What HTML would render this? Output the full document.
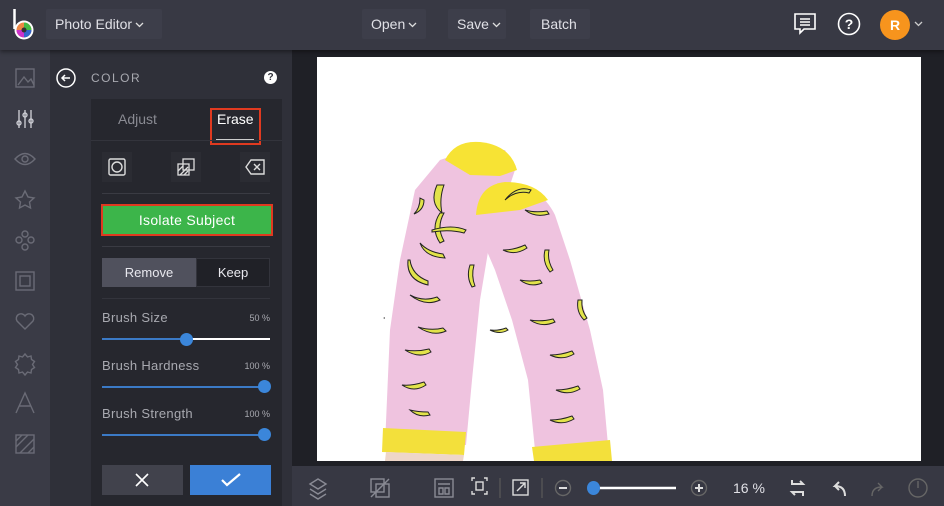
<!DOCTYPE html>
<html><head><meta charset="utf-8"><style>
*{margin:0;padding:0;box-sizing:border-box}
body{width:944px;height:506px;background:#25262c;font-family:"Liberation Sans",sans-serif;position:relative;overflow:hidden;color:#ccc}
.abs{position:absolute}
.top{left:0;top:0;width:944px;height:50px;background:#383944;box-shadow:0 2px 4px rgba(0,0,0,.4);z-index:2}
.btn{position:absolute;top:9px;height:30px;line-height:30px;background:#3d3e4a;color:#e0e0e6;font-size:14px;padding:0 9px;border-radius:2px;white-space:nowrap}
.btn svg{position:static;display:inline-block;vertical-align:middle;margin-left:3px}
.side{left:0;top:50px;width:50px;height:456px;background:#3a3b46}
.panel{left:50px;top:50px;width:242px;height:456px;background:#2f3039}
.card{left:91px;top:99px;width:191px;height:407px;background:#26272e}
.sl{position:absolute;left:102px;width:168px;height:2px;background:#3b7ac6}
.knob{position:absolute;width:13px;height:13px;border-radius:50%;background:#3b86da}
.lbl{position:absolute;left:102px;font-size:13px;color:#a8a9b0;letter-spacing:.3px}
.pct{position:absolute;right:674px;font-size:9px;color:#a8a9b0}
svg{position:absolute}
</style></head><body>
<div class="abs top">
 <svg style="left:10px;top:7px" width="28" height="34" viewBox="0 0 28 34"><path d="M4.5 2v20" stroke="#fff" stroke-width="2.5"/><circle cx="14" cy="23" r="9.5" fill="#fff"/><circle cx="14" cy="23" r="7.5" fill="#e84"/><path d="M14 23L14 15.5A7.5 7.5 0 0 1 21.5 23Z" fill="#4b4"/><path d="M14 23L21.5 23A7.5 7.5 0 0 1 14 30.5Z" fill="#36c"/><path d="M14 23L14 30.5A7.5 7.5 0 0 1 6.5 23Z" fill="#c3c"/><circle cx="14" cy="23" r="2.5" fill="#333"/></svg>
 <div class="btn" style="left:46px;width:116px">Photo Editor<svg width="9" height="6" viewBox="0 0 9 6"><path d="M1 1l3.5 3.5L8 1" stroke="#ddd" stroke-width="1.3" fill="none"/></svg></div>
 <div class="btn" style="left:362px;width:64px">Open<svg width="9" height="6" viewBox="0 0 9 6"><path d="M1 1l3.5 3.5L8 1" stroke="#ddd" stroke-width="1.3" fill="none"/></svg></div>
 <div class="btn" style="left:448px;width:58px">Save<svg width="9" height="6" viewBox="0 0 9 6"><path d="M1 1l3.5 3.5L8 1" stroke="#ddd" stroke-width="1.3" fill="none"/></svg></div>
 <div class="btn" style="left:530px;width:60px;padding:0 11px">Batch</div>
 <svg style="left:793px;top:12px" width="24" height="24" viewBox="0 0 24 24" fill="none" stroke="#fff" stroke-width="1.6"><path d="M2 2h20v15H11l-4 4v-4H2z"/><path d="M7 7h10M7 10h10M7 13h10"/></svg>
 <svg style="left:837px;top:12px" width="24" height="24" viewBox="0 0 24 24"><circle cx="12" cy="12" r="10.5" fill="none" stroke="#fff" stroke-width="1.6"/><text x="12" y="17" fill="#fff" font-size="14" font-weight="bold" text-anchor="middle" font-family="Liberation Sans">?</text></svg>
 <div class="abs" style="left:880px;top:10px;width:30px;height:30px;border-radius:50%;background:#f7941d;color:#fff;font-weight:bold;font-size:14px;text-align:center;line-height:30px">R</div>
 <svg style="left:914px;top:21px" width="9" height="6" viewBox="0 0 9 6"><path d="M1 1l3.5 3.5L8 1" stroke="#ccc" stroke-width="1.3" fill="none"/></svg>
</div>
<div class="abs side"></div>
<svg style="left:0;top:50px" width="50" height="410" viewBox="0 50 50 410" fill="none" stroke="#6a6b76" stroke-width="1.4">
 <rect x="16" y="69" width="18" height="18"/><path d="M18 85l6-8 4 5 3-3 3 6"/>
 <g stroke="#c8c9d0"><path d="M19 110v18M25 110v18M31 110v18"/><circle cx="19" cy="123" r="2"/><circle cx="25" cy="115" r="2"/><circle cx="31" cy="121" r="2"/></g>
 <path d="M15 159q10-11 20 0q-10 11-20 0z"/><circle cx="25" cy="159" r="3"/>
 <path d="M25 191l3 6 6 1-4.5 4 1 6-5.5-3-5.5 3 1-6-4.5-4 6-1z"/>
 <circle cx="25" cy="234" r="3"/><circle cx="19" cy="240" r="3"/><circle cx="31" cy="240" r="3"/><circle cx="25" cy="247" r="3"/>
 <rect x="16" y="272" width="18" height="18"/><rect x="20" y="276" width="10" height="10"/>
 <path d="M25 329l-8-8a4.5 4.5 0 0 1 8-5a4.5 4.5 0 0 1 8 5z"/>
 <path d="M25 354l2.5 3 3.5-1 .5 3.5 3 2-2 3 2 3-3 2-.5 3.5-3.5-1-2.5 3-2.5-3-3.5 1-.5-3.5-3-2 2-3-2-3 3-2 .5-3.5 3.5 1z"/>
 <path d="M16 413l9-20 9 20M19 406h12"/>
 <rect x="16" y="435" width="18" height="18"/><path d="M16 447l12-12M20 453l14-14M16 441l6-6M28 453l6-6"/>
</svg>
<div class="abs panel"></div>
<svg style="left:56px;top:68px" width="20" height="20" viewBox="0 0 20 20" fill="none" stroke="#fff" stroke-width="1.5"><circle cx="10" cy="10" r="9"/><path d="M14 10H6M9 7l-3 3 3 3"/></svg>
<div class="abs" style="left:91px;top:71px;font-size:12px;letter-spacing:1.5px;color:#a8a9b0">COLOR</div>
<div class="abs" style="left:264px;top:71px;width:13px;height:13px;border-radius:50%;background:#fff;color:#2f3039;font-size:10px;font-weight:bold;text-align:center;line-height:13px">?</div>
<div class="abs card"></div>
<div class="abs" style="left:118px;top:111px;font-size:14px;color:#8a8b93">Adjust</div>
<div class="abs" style="left:210px;top:108px;width:51px;height:37px;border:2px solid #e03a20"></div>
<div class="abs" style="left:217px;top:111px;font-size:14px;color:#fff">Erase</div>
<div class="abs" style="left:216px;top:139px;width:38px;height:1px;background:#ccc"></div>
<div class="abs" style="left:91px;top:140px;width:191px;height:1px;background:#33343c"></div>
<div class="abs" style="left:102px;top:152px;width:30px;height:30px;background:#2b2c33"></div>
<svg style="left:108px;top:158px" width="18" height="18" viewBox="0 0 18 18" fill="none" stroke="#ddd" stroke-width="1.4"><rect x="1" y="1" width="16" height="16" rx="1.5"/><circle cx="9" cy="9" r="5"/></svg>
<div class="abs" style="left:171px;top:152px;width:30px;height:30px;background:#2b2c33"></div>
<svg style="left:177px;top:158px" width="18" height="18" viewBox="0 0 18 18" fill="none" stroke="#ddd" stroke-width="1.3"><rect x="6" y="1" width="11" height="11"/><rect x="1" y="6" width="11" height="11"/><path d="M1 13l5-5M3 17l8-8M7 17l4-4"/></svg>
<div class="abs" style="left:240px;top:152px;width:30px;height:30px;background:#2b2c33"></div>
<svg style="left:245px;top:159px" width="20" height="16" viewBox="0 0 20 16" fill="none" stroke="#ddd" stroke-width="1.4"><path d="M6 1h13v14H6L1 8z"/><path d="M9 5l6 6M15 5l-6 6"/></svg>
<div class="abs" style="left:102px;top:193px;width:168px;height:1px;background:#3a3b43"></div>
<div class="abs" style="left:101px;top:204px;width:172px;height:32px;border:2px solid #e03a20;background:#3cb54a;color:#fff;font-size:14px;text-align:center;line-height:28px;letter-spacing:.3px">Isolate Subject</div>
<div class="abs" style="left:102px;top:246px;width:168px;height:1px;background:#3a3b43"></div>
<div class="abs" style="left:102px;top:258px;width:94px;height:29px;background:#50515d;color:#e8e8ee;font-size:13px;text-align:center;line-height:29px">Remove</div>
<div class="abs" style="left:196px;top:258px;width:74px;height:29px;background:#202127;border:1px solid #33343c;color:#e8e8ee;font-size:13px;text-align:center;line-height:27px">Keep</div>
<div class="abs" style="left:102px;top:298px;width:168px;height:1px;background:#33343c"></div>
<div class="lbl" style="top:310px">Brush Size</div><div class="pct" style="top:313px">50 %</div>
<div class="sl" style="top:338px;width:84px"></div><div class="abs" style="left:186px;top:338px;width:84px;height:2px;background:#fff"></div><div class="knob" style="left:180px;top:333px"></div>
<div class="lbl" style="top:358px">Brush Hardness</div><div class="pct" style="top:361px">100 %</div>
<div class="sl" style="top:386px"></div><div class="knob" style="left:258px;top:380px"></div>
<div class="lbl" style="top:406px">Brush Strength</div><div class="pct" style="top:409px">100 %</div>
<div class="sl" style="top:434px"></div><div class="knob" style="left:258px;top:428px"></div>
<div class="abs" style="left:102px;top:465px;width:81px;height:30px;background:#41424c"></div>
<svg style="left:135px;top:473px" width="14" height="14" viewBox="0 0 14 14" stroke="#fff" stroke-width="1.6"><path d="M1 1l12 12M13 1L1 13"/></svg>
<div class="abs" style="left:190px;top:465px;width:81px;height:30px;background:#3b80d6"></div>
<svg style="left:221px;top:473px" width="20" height="14" viewBox="0 0 20 14" fill="none" stroke="#fff" stroke-width="2.2"><path d="M1 7l5 5L19 1"/></svg>
<div class="abs" style="left:292px;top:50px;width:652px;height:416px;background:#1f2026"></div>
<div class="abs" style="left:317px;top:57px;width:604px;height:404px;background:#fff"></div>
<svg style="left:317px;top:57px" width="604" height="404" viewBox="317 57 604 404">
 <path d="M385 445L390 330L400 260L415 190L440 160L470 150L505 150L515 170L505 200L490 240L480 300L472 380L466 445Z" fill="#efc3df"/>
 <path d="M445 160Q455 140 480 142Q510 145 517 170L500 176L470 175Z" fill="#f7e334"/>
 <path d="M383 428L466 432L464 455L382 452Z" fill="#f3e03b"/>
 <path d="M386 452L464 455L463 461L385 461Z" fill="#eed6c8"/>
 <path d="M475 200Q480 185 505 182Q540 185 555 215L570 260L590 330L603 390L608 445L535 450L528 380L512 320L495 270L480 235Z" fill="#efc3df"/>
 <path d="M476 215Q478 185 505 182Q535 182 548 200L520 210Z" fill="#f7e334"/>
 <path d="M532 447L610 440L612 461L534 461Z" fill="#f3e03b"/>
 <g fill="#e2e34a" stroke="#222" stroke-width="1">
  <path d="M437 185q-8 18 5 28q-3-14 2-28z"/><path d="M420 198q0 10 -6 16q10-4 10-14z"/>
  <path d="M440 213q-10 15 0 30l4-2q-8-14 0-28z"/><path d="M432 230q20-6 34 0l-2 3q-14-4-32-1z"/>
  <path d="M420 243q5 14 25 15l-2-4q-15-2-23-11z"/><path d="M385 318q-2 0 0 0z"/>
  <path d="M408 260q-2 20 20 25l0-4q-16-6-18-21z"/><path d="M410 295q15 12 30 5l-3-3q-14 5-27-2z"/>
  <path d="M418 327q15 10 28 4l-3-3q-12 3-25-1z"/><path d="M405 350q14 9 26 2l-2-3q-12 3-24 1z"/>
  <path d="M402 385q12 8 24 0l-2-3q-12 4-22 3z"/><path d="M410 410q8 8 20 5l-2-3q-10 0-18-2z"/>
  <path d="M505 200q12-15 26-10l-2 3q-13-3-24 7z"/><path d="M525 210q10 8 24 4l-2-3q-12 2-22-1z"/>
  <path d="M503 250q12 6 24 -2l-2-3q-11 5-22 5z"/><path d="M520 280q10 8 22 3l-2-3q-10 2-20 0z"/>
  <path d="M545 250q-3 12 5 22l3-2q-6-10-4-20z"/><path d="M530 320q12 8 25 2l-2-3q-12 3-23 1z"/>
  <path d="M550 355q12 6 24 -1l-2-3q-11 4-22 4z"/><path d="M556 390q12 6 24 -1l-2-3q-11 4-22 4z"/>
  <path d="M550 420q12 6 24 -1l-2-3q-11 4-22 4z"/><path d="M578 300q-2 12 6 20l3-2q-6-8-5-18z"/>
  <path d="M470 265q-4 12 2 22l3-1q-4-10-1-21z"/><path d="M490 330q10 5 18 0l-2-2q-8 3-16 2z"/>
 </g>
</svg>
<div class="abs" style="left:292px;top:466px;width:652px;height:40px;background:#373843"></div>
<svg style="left:292px;top:466px" width="652" height="40" viewBox="292 466 652 40" fill="none" stroke="#8a8b95" stroke-width="1.4">
 <path d="M310 484l8-5 8 5-8 5zM310 489l8 5 8-5M310 494l8 5 8-5"/>
 <rect x="371" y="479" width="13" height="13"/><rect x="376" y="484" width="13" height="13"/><path d="M371 497l18-18"/>
 <rect x="435" y="479" width="18" height="18"/><path d="M438 484h12M439 488h4v6h-4zM445 488h4v6h-4z"/>
 <g stroke="#ddd"><path d="M472 481v-3h3M484 478h3v3M487 491v3h-3M475 494h-3v-3"/><rect x="476" y="482" width="7" height="8"/></g>
 <path d="M500 478v20M542 478v20" stroke="#555"/>
 <g stroke="#ddd"><rect x="513" y="480" width="15" height="15"/><path d="M517 491l8-8M520 483h5v5"/></g>
 <circle cx="563" cy="488" r="7.5" stroke="#666"/><path d="M559 488h8" stroke="#ddd" stroke-width="2"/>
 <path d="M596 488h80" stroke="#fff" stroke-width="2.5"/>
 <circle cx="699" cy="488" r="7.5" stroke="#666"/><path d="M695 488h8M699 484v8" stroke="#ddd" stroke-width="2"/>
 <g stroke="#ddd" stroke-width="2"><path d="M791 484h12l-3-3M804 492h-12l3 3M792 484v-4M803 492v4"/><path d="M845 496q0-10-10-10l4-4M835 486l4 4"/></g>
 <path d="M872 496q0-9 10-9l-4-4M882 487l-4 4" stroke="#666"/>
 <circle cx="918" cy="488" r="9" stroke="#666"/><path d="M918 481v7" stroke="#666"/>
</svg>
<div class="knob" style="left:587px;top:481px;width:13px;height:14px"></div>
<div class="abs" style="left:733px;top:480px;font-size:14px;color:#e0e0e6">16 %</div>
</body></html>
